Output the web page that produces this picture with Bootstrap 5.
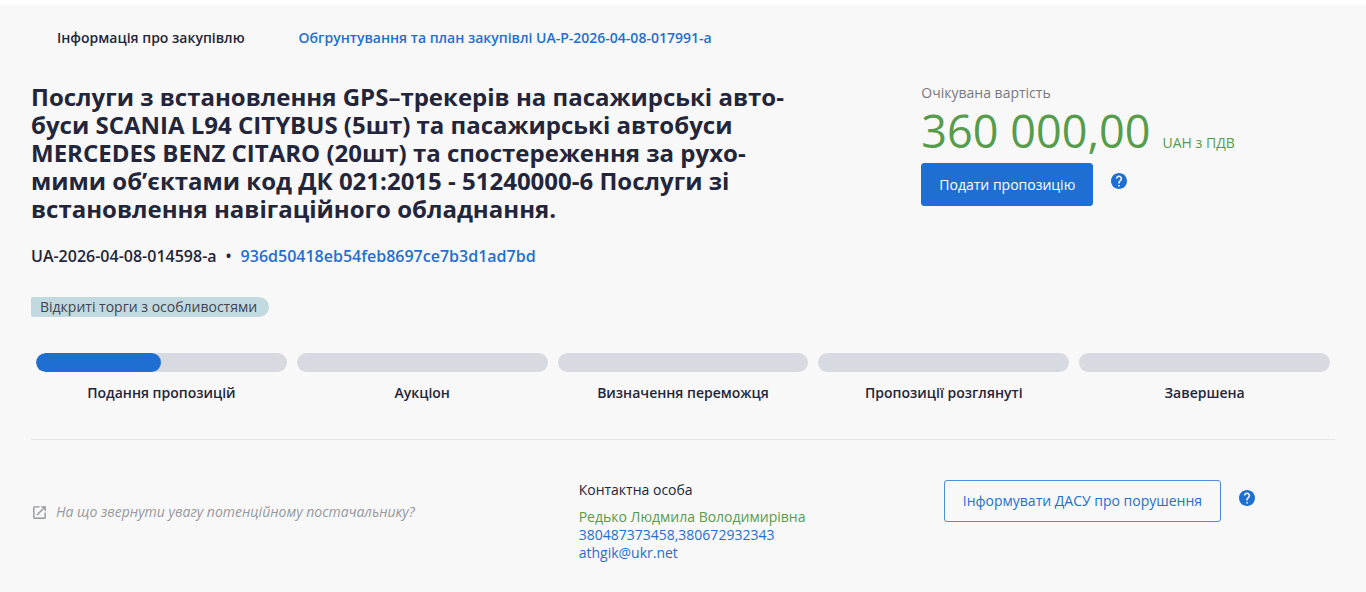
<!DOCTYPE html>
<html lang="uk">
<head>
<meta charset="utf-8">
<meta name="viewport" content="width=device-width, initial-scale=1">
<title>Інформація про закупівлю</title>
<link href="https://cdn.jsdelivr.net/npm/bootstrap@5.3.0/dist/css/bootstrap.min.css" rel="stylesheet">
<style>
  :root { --ink: #23253a; --blue: #1f6fd2; --green: #569c4c; }
  body { background: #f8f8f8; color: var(--ink); font-family: "Open Sans", "Noto Sans", sans-serif; font-size: 14px; line-height: 20px; border-top: 5px solid #fff; }
  a { color: var(--blue); text-decoration: none; }
  a:hover { text-decoration: underline; }
  .page { padding: 23px 31px 24px; }
  .tabs { gap: 54px; padding-left: 26px; font-weight: 600; }
  .overview { margin-top: 35px; }
  .tender-title { font-size: 24px; font-weight: 700; line-height: 28px; max-width: 770px; hyphens: manual; margin-bottom: 21px; }
  .tender-ids { font-size: 16px; line-height: 24px; font-weight: 600; column-gap: 9px; margin-bottom: 29px; }
  .value-col { padding-left: 21px; }
  .muted-label { color: #77787f; }
  .amount { font-size: 45px; line-height: 56px; color: var(--green); }
  .unit { color: var(--green); }
  .btn { --bs-btn-font-size: 14px; --bs-btn-border-radius: 3px; --bs-btn-padding-x: 17px; --bs-btn-padding-y: 10px; }
  .btn-offer { --bs-btn-line-height: 21px; --bs-btn-bg: var(--blue); --bs-btn-color: #fff; --bs-btn-border-color: var(--blue); --bs-btn-hover-bg: #195cb0; --bs-btn-hover-color: #fff; font-weight: 500; }
  .btn-report { --bs-btn-line-height: 20px; --bs-btn-padding-x: 18px; --bs-btn-color: var(--blue); --bs-btn-border-color: #4c8ddd; --bs-btn-hover-bg: var(--blue); --bs-btn-hover-color: #fff; }
  .help { background: none; color: var(--blue); margin: 10px 0 0 18px; }
  .procedure { background: #c3d9e0; color: #41434f; padding: 0 12px 0 9px; border-radius: 2px 10px 10px 2px; }
  .stages { margin: 36px 0; }
  .stage { padding: 0 5px; text-align: center; font-weight: 600; }
  .progress { --bs-progress-height: 19px; --bs-progress-bg: #d7dae0; --bs-progress-border-radius: 10px; --bs-progress-bar-bg: var(--blue); margin-bottom: 11px; }
  .progress-bar { border-radius: 10px; }
  .footer-grid { display: grid; grid-template-columns: 42% 28% 30%; border-top: 1px solid #e4e5e8; padding-top: 40px; }
  .hint { color: #97989c; font-style: italic; gap: 8px; padding-top: 22px; }
  .contact { line-height: 18px; }
</style>
</head>
<body>
<main class="page">
  <nav class="tabs d-flex" aria-label="Розділи">
    <span>Інформація про закупівлю</span>
    <a href="#plan">Обгрунтування та план закупівлі UA-P-2026-04-08-017991-a</a>
  </nav>

  <div class="row gx-0 overview">
    <div class="col-8">
      <h1 class="tender-title">Послуги з встановлення GPS–трекерів на пасажирські авто&shy;буси SCANIA L94 CITYBUS (5шт) та пасажирські автобуси MERCEDES BENZ CITARO (20шт) та спостереження за рухо&shy;мими об’єктами код ДК 021:2015 - 51240000-6 Послуги зі встановлення навігаційного обладнання.</h1>
      <div class="tender-ids d-flex flex-wrap"><span>UA-2026-04-08-014598-a</span><span>•</span><a href="#id">936d50418eb54feb8697ce7b3d1ad7bd</a></div>
    </div>
    <div class="col-4 value-col">
      <div class="muted-label">Очікувана вартість</div>
      <div class="d-flex align-items-baseline gap-2"><span class="amount">360 000,00</span><span class="unit ms-1">UAH з ПДВ</span></div>
      <div class="d-flex align-items-start pt-1">
        <button type="button" class="btn btn-offer">Подати пропозицію</button>
        <button type="button" class="help border-0 p-0 d-flex" aria-label="Довідка"><svg width="16" height="16" viewBox="2 2 20 20" fill="currentColor"><path d="M12 2C6.480 2 2 6.480 2 12s4.480 10 10 10 10-4.480 10-10S17.520 2 12 2zm1 17h-2v-2h2v2zm2.070-7.750-.9.920C13.450 12.900 13 13.500 13 15h-2v-.5c0-1.100.45-2.100 1.170-2.830l1.240-1.260c.37-.36.59-.86.59-1.410 0-1.100-.9-2-2-2s-2 .9-2 2H8c0-2.210 1.790-4 4-4s4 1.790 4 4c0 .88-.36 1.680-.93 2.250z"/></svg></button>
      </div>
    </div>
  </div>

  <div class="d-flex"><span class="procedure">Відкриті торги з особливостями</span></div>

  <div class="row row-cols-5 gx-0 stages">
    <div class="stage"><div class="progress" role="progressbar" aria-label="Подання пропозицій" aria-valuenow="50" aria-valuemin="0" aria-valuemax="100"><div class="progress-bar" style="width:50%"></div></div>Подання пропозицій</div>
    <div class="stage"><div class="progress"></div>Аукціон</div>
    <div class="stage"><div class="progress"></div>Визначення переможця</div>
    <div class="stage"><div class="progress"></div>Пропозиції розглянуті</div>
    <div class="stage"><div class="progress"></div>Завершена</div>
  </div>

  <div class="footer-grid">
    <div><a href="#hint" class="hint d-flex align-items-center"><svg width="17" height="17" viewBox="0 0 24 24" fill="currentColor" aria-hidden="true"><path d="M19 19H5V5h7V3H5c-1.110 0-2 .9-2 2v14c0 1.100.89 2 2 2h14c1.100 0 2-.9 2-2v-7h-2v7zM14 3v2h3.590l-9.830 9.830 1.410 1.410L19 6.410V10h2V3h-7z"/></svg><span>На що звернути увагу потенційному постачальнику?</span></a></div>
    <div>
      <div class="mb-2">Контактна особа</div>
      <div class="contact"><div class="unit">Редько Людмила Володимирівна</div><a class="d-block" href="tel:380487373458">380487373458,380672932343</a><a class="d-block" href="mailto:athgik@ukr.net">athgik@ukr.net</a></div>
    </div>
    <div class="d-flex align-items-start">
      <button type="button" class="btn btn-report">Інформувати ДАСУ про порушення</button>
      <button type="button" class="help border-0 p-0 d-flex" aria-label="Довідка"><svg width="16" height="16" viewBox="2 2 20 20" fill="currentColor"><path d="M12 2C6.480 2 2 6.480 2 12s4.480 10 10 10 10-4.480 10-10S17.520 2 12 2zm1 17h-2v-2h2v2zm2.070-7.750-.9.920C13.450 12.900 13 13.500 13 15h-2v-.5c0-1.100.45-2.100 1.170-2.830l1.240-1.260c.37-.36.59-.86.59-1.410 0-1.100-.9-2-2-2s-2 .9-2 2H8c0-2.210 1.790-4 4-4s4 1.790 4 4c0 .88-.36 1.680-.93 2.250z"/></svg></button>
    </div>
  </div>
</main>
<script src="https://cdn.jsdelivr.net/npm/bootstrap@5.3.0/dist/js/bootstrap.bundle.min.js"></script>
</body>
</html>
